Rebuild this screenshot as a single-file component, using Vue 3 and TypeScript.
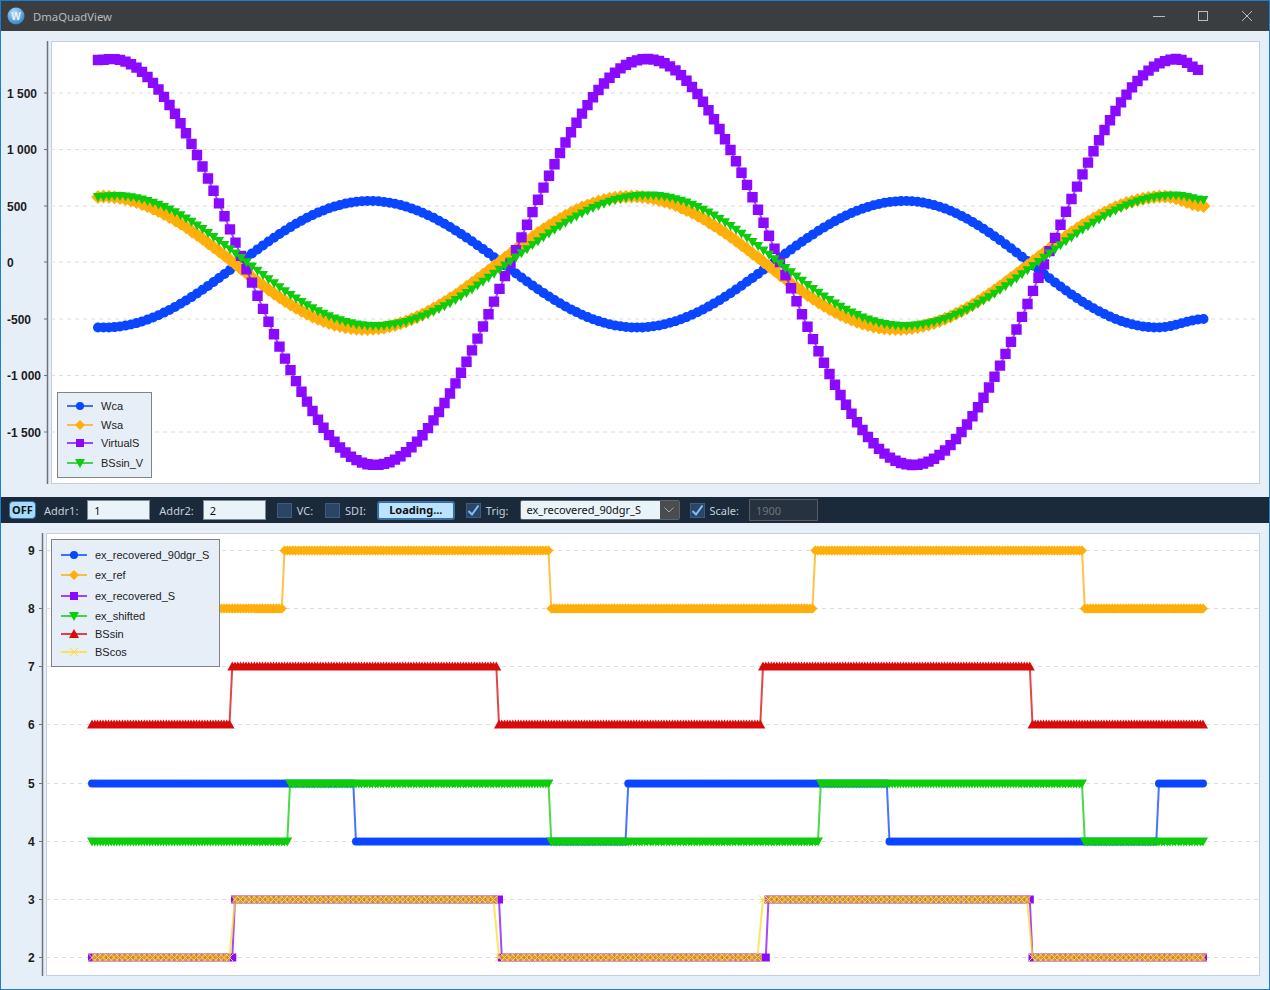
<template>
  <div class="window">
    <header class="title-bar">
      <svg class="app-icon" viewBox="0 0 18 18" width="18" height="18">
        <defs>
          <radialGradient id="iconGlow" cx="40%" cy="30%" r="75%">
            <stop offset="0%" stop-color="#b5ddf5" />
            <stop offset="100%" stop-color="#2f7fc4" />
          </radialGradient>
        </defs>
        <circle cx="9" cy="9" r="8.5" fill="url(#iconGlow)" />
        <text x="9" y="13" text-anchor="middle" class="app-icon-letter">W</text>
      </svg>
      <span class="title-text">DmaQuadView</span>
      <div class="window-buttons">
        <svg viewBox="0 0 12 12" width="12" height="12"><path d="M0 6.5H12" stroke="#b9bcbf" /></svg>
        <svg viewBox="0 0 12 12" width="12" height="12"><rect x="1.5" y="1.5" width="9" height="9" fill="none" stroke="#b9bcbf" /></svg>
        <svg viewBox="0 0 12 12" width="12" height="12"><path d="M1 1L11 11M11 1L1 11" stroke="#b9bcbf" /></svg>
      </div>
    </header>

    <section class="chart-panel">
      <svg class="chart" viewBox="1 31 1268 466" width="1268" height="466">
        <rect x="51.5" y="41.5" width="1208" height="442" fill="#fff" stroke="#c3cfe0" />
        <path d="M47.5 41V484" stroke="#6f7276" stroke-width="1.5" />
        <g v-for="t in topTicks" :key="t.label">
          <path :d="`M51 ${t.y}H1258`" class="grid" />
          <path :d="`M44 ${t.y}H47`" stroke="#6f7276" />
          <text x="7" :y="Math.floor(t.y) + 5" class="tick">{{ t.label }}</text>
        </g>
        <g v-for="s in topSeries" :key="s.name" class="trace">
          <path :d="s.line" fill="none" :stroke="s.color" stroke-width="2" stroke-opacity="0.75" />
          <path :d="s.marks" :fill="s.color" />
        </g>
      </svg>
      <div class="legend legend-top">
        <div v-for="e in topLegend" :key="e.name" class="legend-row" :style="{ height: e.h + 'px' }">
          <svg width="26" height="12" viewBox="0 0 26 12">
            <path d="M0 6H26" :stroke="e.color" stroke-width="2" stroke-opacity="0.75" />
            <path :d="markerPath(e.kind, 13, 6)" :fill="e.kind === 'x' ? 'none' : e.color" :stroke="e.kind === 'x' ? e.color : 'none'" />
          </svg>
          <span>{{ e.name }}</span>
        </div>
      </div>
    </section>

    <nav class="toolbar">
      <button class="off-btn">OFF</button>
      <label class="lbl">Addr1:</label>
      <input class="addr" value="1" />
      <label class="lbl">Addr2:</label>
      <input class="addr" value="2" />
      <span class="check"></span>
      <label class="lbl">VC:</label>
      <span class="check second"></span>
      <label class="lbl">SDI:</label>
      <button class="load-btn">Loading...</button>
      <span class="check on">
        <svg viewBox="0 0 15 15" width="15" height="15"><path d="M2.5 8L6 11.5L12.5 2.5" fill="none" stroke="#7cc0f5" stroke-width="2" /></svg>
      </span>
      <label class="lbl">Trig:</label>
      <div class="combo">
        <span class="combo-value">ex_recovered_90dgr_S</span>
        <span class="combo-arrow">
          <svg viewBox="0 0 10 6" width="10" height="6"><path d="M0.5 0.5L5 5L9.5 0.5" fill="none" stroke="#a5a8ab" /></svg>
        </span>
      </div>
      <span class="check on scale-check">
        <svg viewBox="0 0 15 15" width="15" height="15"><path d="M2.5 8L6 11.5L12.5 2.5" fill="none" stroke="#7cc0f5" stroke-width="2" /></svg>
      </span>
      <label class="lbl">Scale:</label>
      <input class="scale" value="1900" disabled />
    </nav>

    <section class="chart-panel">
      <svg class="chart" viewBox="1 523 1268 466" width="1268" height="466">
        <rect x="46.5" y="533.5" width="1213" height="442" fill="#fff" stroke="#c3cfe0" />
        <path d="M42.5 533V976" stroke="#6f7276" stroke-width="1.5" />
        <g v-for="t in bottomTicks" :key="t.label">
          <path :d="`M46 ${t.y}H1258`" class="grid" />
          <path :d="`M39 ${t.y}H42`" stroke="#6f7276" />
          <text x="28" :y="t.y + 4" class="tick">{{ t.label }}</text>
        </g>
        <g v-for="s in bottomSeries" :key="s.name" class="trace">
          <path :d="s.line" fill="none" :stroke="s.color" stroke-width="2" stroke-opacity="0.75" />
          <template v-if="s.kind === 'x'">
            <path :d="mixBand" fill="none" stroke="#d99b3e" stroke-width="7" />
            <path :d="mixBand" fill="none" stroke="#a848d8" stroke-width="7" stroke-dasharray="1.5 3" stroke-opacity="0.45" />
          </template>
          <path :d="s.marks" :fill="s.kind === 'x' ? 'none' : s.color" :stroke="s.kind === 'x' ? s.color : 'none'" />
        </g>
      </svg>
      <div class="legend legend-bottom">
        <div v-for="e in bottomLegend" :key="e.name" class="legend-row" :style="{ height: e.h + 'px' }">
          <svg width="26" height="12" viewBox="0 0 26 12">
            <path d="M0 6H26" :stroke="e.color" stroke-width="2" stroke-opacity="0.75" />
            <path :d="markerPath(e.kind, 13, 6)" :fill="e.kind === 'x' ? 'none' : e.color" :stroke="e.kind === 'x' ? e.color : 'none'" />
          </svg>
          <span>{{ e.name }}</span>
        </div>
      </div>
    </section>
  </div>
</template>

<script setup lang="ts">
type Kind = 'circle' | 'diamond' | 'square' | 'down' | 'up' | 'x'
type Point = [number, number]

const BLUE = '#0a46ff'
const ORANGE = '#ffae0a'
const PURPLE = '#8a0aff'
const GREEN = '#0ccc0c'
const RED = '#d80a0a'
const YELLOW = '#ffdc28'

const markerPath = (kind: Kind, x: number, y: number, s = 1): string => {
  switch (kind) {
    case 'circle':
      return `M${x - 4 * s} ${y}a${4 * s} ${4 * s} 0 1 0 ${8 * s} 0a${4 * s} ${4 * s} 0 1 0 ${-8 * s} 0Z`
    case 'diamond':
      return `M${x - 5 * s} ${y}L${x} ${y - 5 * s}L${x + 5 * s} ${y}L${x} ${y + 5 * s}Z`
    case 'square':
      return `M${x - 4 * s} ${y - 4 * s}h${8 * s}v${8 * s}h${-8 * s}Z`
    case 'down':
      return `M${x - 5 * s} ${y - 4 * s}h${10 * s}L${x} ${y + 5 * s}Z`
    case 'up':
      return `M${x - 5 * s} ${y + 4 * s}h${10 * s}L${x} ${y - 5 * s}Z`
    default:
      return `M${x - 4} ${y - 4}L${x + 4} ${y + 4}M${x + 4} ${y - 4}L${x - 4} ${y + 4}`
  }
}

const buildSeries = (name: string, kind: Kind, color: string, pts: Point[], size = 1) => ({
  name,
  kind,
  color,
  line: 'M' + pts.map(([x, y]) => `${x.toFixed(1)} ${y.toFixed(1)}`).join('L'),
  marks: pts.map(([x, y]) => markerPath(kind, +x.toFixed(1), +y.toFixed(1), size)).join('')
})

// smooth curve through the min/max knots of each wave
const wave = (knots: Point[]): Point[] => {
  const pts: Point[] = []
  const last = knots[knots.length - 1][0]
  for (let x = knots[0][0]; x <= last; x += 5.5) {
    let i = 0
    while (i < knots.length - 2 && x > knots[i + 1][0]) i++
    const [x0, y0] = knots[i]
    const [x1, y1] = knots[i + 1]
    const t = (x - x0) / (x1 - x0)
    pts.push([x, y0 + ((y1 - y0) * (1 - Math.cos(Math.PI * t))) / 2])
  }
  return pts
}

const levelY = (v: number) => Math.floor(957.5 - (v - 2) * 58.14) + 0.5

const digital = (low: number, startHigh: boolean, edges: number[], step = 2.75): Point[] => {
  const pts: Point[] = []
  for (let x = 92; x <= 1205; x += step) {
    const flips = edges.filter((e) => x >= e).length
    const high = flips % 2 === 0 ? startHigh : !startHigh
    pts.push([x, levelY(high ? low + 1 : low)])
  }
  return pts
}

const topTicks = [
  { label: '1 500', y: 93 },
  { label: '1 000', y: 149.5 },
  { label: '500', y: 206 },
  { label: '0', y: 262 },
  { label: '-500', y: 319 },
  { label: '-1 000', y: 375.5 },
  { label: '-1 500', y: 432 }
]

const bottomTicks = [9, 8, 7, 6, 5, 4, 3, 2].map((v) => ({
  label: String(v),
  y: levelY(v)
}))

const topSeries = [
  buildSeries('Wca', 'circle', BLUE, wave([[98, 327.5], [105, 327.5], [370, 201], [637, 327.5], [905, 201], [1158, 327.5], [1205, 319]]), 1.25),
  buildSeries('Wsa', 'diamond', ORANGE, wave([[98, 197], [102, 196.5], [365, 329], [632, 196.5], [897, 329], [1165, 196.5], [1205, 206]]), 1.4),
  buildSeries('VirtualS', 'square', PURPLE, wave([[98, 60], [112, 59], [375, 465], [647, 59], [913, 465], [1177, 59], [1203, 71]]), 1.3),
  buildSeries('BSsin_V', 'down', GREEN, wave([[98, 197], [115, 196], [375, 326], [648, 195.5], [905, 326], [1175, 195.5], [1205, 200]]))
]

const bottomSeries = [
  buildSeries('ex_recovered_90dgr_S', 'circle', BLUE, digital(4, true, [354, 627, 889, 1158])),
  buildSeries('ex_ref', 'diamond', ORANGE, digital(8, false, [283, 551, 813, 1083])),
  buildSeries('ex_recovered_S', 'square', PURPLE, digital(2, false, [233, 501, 767, 1030])),
  buildSeries('ex_shifted', 'down', GREEN, digital(4, false, [289, 551, 820, 1083])),
  buildSeries('BSsin', 'up', RED, digital(6, false, [230, 498, 761, 1030])),
  buildSeries('BScos', 'x', YELLOW, digital(2, false, [230, 498, 762, 1030], 5.5))
]

// flat stretches where the two bottom traces lie on top of each other
const mixBand = [
  [92, 230, 2],
  [233, 498, 3],
  [501, 762, 2],
  [767, 1030, 3],
  [1033, 1205, 2]
].map(([a, b, v]) => `M${a} ${levelY(v)}H${b}`).join('')

const topLegend = [
  { name: 'Wca', kind: 'circle' as Kind, color: BLUE, h: 18 },
  { name: 'Wsa', kind: 'diamond' as Kind, color: ORANGE, h: 20 },
  { name: 'VirtualS', kind: 'square' as Kind, color: PURPLE, h: 16 },
  { name: 'BSsin_V', kind: 'down' as Kind, color: GREEN, h: 24 }
]

const bottomLegend = [
  { name: 'ex_recovered_90dgr_S', kind: 'circle' as Kind, color: BLUE, h: 20 },
  { name: 'ex_ref', kind: 'diamond' as Kind, color: ORANGE, h: 20 },
  { name: 'ex_recovered_S', kind: 'square' as Kind, color: PURPLE, h: 22 },
  { name: 'ex_shifted', kind: 'down' as Kind, color: GREEN, h: 18 },
  { name: 'BSsin', kind: 'up' as Kind, color: RED, h: 18 },
  { name: 'BScos', kind: 'x' as Kind, color: YELLOW, h: 18 }
]
</script>

<style>
html,
body {
  margin: 0;
  background: #e6eef8;
  overflow: hidden;
}
</style>

<style scoped>
.window {
  width: 1268px;
  height: 988px;
  border: 1px solid #1c7ed0;
  display: flex;
  flex-direction: column;
  background: #e6eef8;
  font-family: "Noto Sans", "Liberation Sans", sans-serif;
}

.title-bar {
  height: 30px;
  background: #3b3e41;
  display: flex;
  align-items: center;
  padding-left: 6px;
  flex-shrink: 0;
}

.app-icon-letter {
  font: bold 10px "Liberation Sans", sans-serif;
  fill: #e8f3fb;
}

.title-text {
  margin-left: 8px;
  font-size: 11.3px;
  color: #b7babd;
}

.window-buttons {
  margin-left: auto;
  margin-right: 16px;
  display: flex;
  gap: 32px;
}

.chart-panel {
  position: relative;
  height: 466px;
  flex-shrink: 0;
}

.chart {
  display: block;
}

.trace {
  filter: blur(0.35px);
}

.grid {
  stroke: #dcdcdc;
  stroke-dasharray: 4 4;
  fill: none;
}

.tick {
  font: bold 12px "Liberation Sans", Arial, sans-serif;
  fill: #1c1c1c;
}

.legend {
  position: absolute;
  background: #e6eef8;
  border: 1px solid #808487;
  box-sizing: border-box;
  display: flex;
  flex-direction: column;
  font: 11px "Liberation Sans", Arial, sans-serif;
  color: #222;
}

.legend-top {
  left: 56px;
  top: 361px;
  width: 95px;
  height: 86px;
  padding: 4px 0 0 9px;
}

.legend-bottom {
  left: 50px;
  top: 16px;
  width: 169px;
  height: 128px;
  padding: 5px 0 0 9px;
}

.legend-row {
  display: flex;
  align-items: center;
  gap: 8px;
  white-space: nowrap;
}

.toolbar {
  height: 26px;
  background: #1a2a3b;
  display: flex;
  align-items: center;
  padding-left: 8px;
  flex-shrink: 0;
  font-size: 11px;
}

.lbl {
  color: #c4d0dc;
  margin-left: 9px;
  white-space: nowrap;
}

.off-btn + .lbl {
  margin-left: 8px;
}

.off-btn {
  width: 27px;
  height: 18px;
  padding: 0;
  border: 1px solid #3a6ea5;
  border-radius: 4px;
  background: #a5dbfd;
  color: #111;
  font: bold 11px "Noto Sans", sans-serif;
  line-height: 14px;
}

.addr {
  width: 63px;
  height: 20px;
  box-sizing: border-box;
  margin-left: 9px;
  padding: 0 6px;
  border: 1px solid #7f8a94;
  background: #e8f4fa;
  color: #111;
  font: 11px "Noto Sans", sans-serif;
  outline: none;
}

.check {
  width: 15px;
  height: 15px;
  box-sizing: border-box;
  background: #2d4565;
  border: 1px solid #3e5b80;
  margin-left: 11px;
  flex-shrink: 0;
  display: flex;
  align-items: center;
  justify-content: center;
}

.check.second {
  margin-left: 12px;
}

.check.on {
  margin-left: 11px;
}

.check svg {
  flex-shrink: 0;
}

.check + .lbl {
  margin-left: 5px;
}

.load-btn {
  width: 78px;
  height: 19px;
  margin-left: 11px;
  padding: 0;
  border: 2px solid #3a6ea5;
  border-radius: 3px;
  background: #b9e3fe;
  color: #111;
  font: bold 11px "Noto Sans", sans-serif;
  line-height: 14px;
}

.combo {
  width: 160px;
  height: 20px;
  margin-left: 11px;
  display: flex;
  box-sizing: border-box;
  border: 1px solid #60656a;
  border-radius: 2px;
  overflow: hidden;
}

.combo-value {
  flex: 1;
  background: #e8f4fa;
  color: #111;
  padding-left: 6px;
  line-height: 18px;
}

.combo-arrow {
  width: 19px;
  background: #4a4d50;
  display: flex;
  align-items: center;
  justify-content: center;
}

.check.scale-check {
  margin-left: 10px;
}

.scale {
  width: 69px;
  height: 22px;
  box-sizing: border-box;
  margin-left: 10px;
  padding: 0 6px;
  border: 1px solid #555b61;
  background: #26323f;
  color: #6f7479;
  font: 11px "Noto Sans", sans-serif;
  outline: none;
}
</style>
